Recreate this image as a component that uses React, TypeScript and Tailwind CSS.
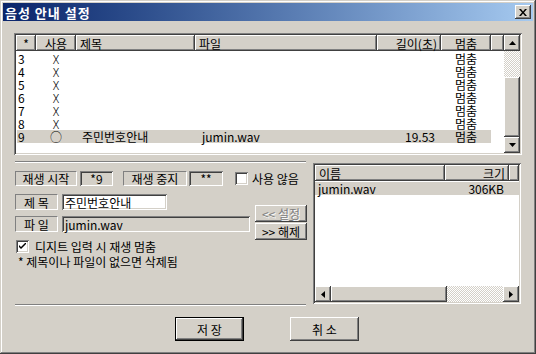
import React from 'react';

// classic 3D edges
const raised = 'shadow-[inset_-1px_-1px_#404040,inset_1px_1px_#ffffff,inset_-2px_-2px_#808080]';
const sunken = 'shadow-[inset_1px_1px_#808080,inset_-1px_-1px_#ffffff,inset_2px_2px_#404040,inset_-2px_-2px_#d4d0c8]';
const checker = 'bg-[repeating-conic-gradient(#ffffff_0_25%,#d4d0c8_0_50%)] bg-[length:2px_2px]';
const staticEdge = 'border-t border-l border-[#808080] border-b border-r border-b-white border-r-white';

type Row = { n: string; use: string; title?: string; file?: string; len?: string; sel?: boolean };

const rows: Row[] = [
  { n: '3', use: 'X' },
  { n: '4', use: 'X' },
  { n: '5', use: 'X' },
  { n: '6', use: 'X' },
  { n: '7', use: 'X' },
  { n: '8', use: 'X' },
  { n: '9', use: '○', title: '주민번호안내', file: 'jumin.wav', len: '19.53', sel: true },
];

function Arrow({ dir }: { dir: 'up' | 'down' | 'left' | 'right' }) {
  const pts = {
    up: '0,4 7,4 3.5,0',
    down: '0,0 7,0 3.5,4',
    left: '4,0 4,7 0,3.5',
    right: '0,0 0,7 4,3.5',
  }[dir];
  const vert = dir === 'up' || dir === 'down';
  return (
    <svg width={vert ? 7 : 4} height={vert ? 4 : 7} viewBox={vert ? '0 0 7 4' : '0 0 4 7'}>
      <polygon points={pts} fill="#000" />
    </svg>
  );
}

function HeadCell({ w, children, align = 'left' }: { w: string; children?: React.ReactNode; align?: string }) {
  return (
    <div className={`${w} h-full shrink-0 bg-[#d4d0c8] ${raised} flex items-center px-[4px] ${align}`}>
      {children}
    </div>
  );
}

function CheckBox({ checked }: { checked?: boolean }) {
  return (
    <div className={`w-[13px] h-[13px] shrink-0 bg-white ${sunken} flex items-center justify-center`}>
      {checked && (
        <svg width="7" height="7" viewBox="0 0 7 7">
          <path d="M0 2 L0 4 L2 6 L7 1 L7 -1 L2 4 Z" fill="#000" />
        </svg>
      )}
    </div>
  );
}

function TopList() {
  return (
    <div className={`h-[122px] bg-white p-[2px] ${sunken} flex`}>
      <div className="flex-1 flex flex-col overflow-hidden">
        <div className="h-[16px] flex">
          <HeadCell w="w-[20px]" align="justify-center">*</HeadCell>
          <HeadCell w="w-[40px]" align="justify-center">사용</HeadCell>
          <HeadCell w="w-[119px]">제목</HeadCell>
          <HeadCell w="w-[182px]">파일</HeadCell>
          <HeadCell w="w-[64px]" align="justify-end">길이(초)</HeadCell>
          <HeadCell w="w-[50px]" align="justify-center">멈춤</HeadCell>
          <HeadCell w="w-[13px]" />
        </div>
        <div className="mt-[1px] flex flex-col">
          {rows.map((r) => (
            <div key={r.n} className="h-[13px] flex">
              <div className={`flex w-[474px] ml-[1px] ${r.sel ? 'bg-[#d4d0c8]' : ''}`}>
                <div className="w-[19px] pl-[1px]">{r.n}</div>
                <div className="w-[40px] text-center font-light">{r.use}</div>
                <div className="w-[119px] pl-[6px]">{r.title}</div>
                <div className="w-[182px] pl-[7px]">{r.file}</div>
                <div className="w-[64px] text-right pr-[6px]">{r.len}</div>
                <div className="w-[50px] text-center">멈춤</div>
              </div>
            </div>
          ))}
        </div>
      </div>
      <div className="w-[16px] flex flex-col">
        <div className={`h-[16px] bg-[#d4d0c8] ${raised} flex items-center justify-center`}>
          <Arrow dir="up" />
        </div>
        <div className={`h-[26px] ${checker}`} />
        <div className={`h-[60px] bg-[#d4d0c8] ${raised}`} />
        <div className={`h-[16px] bg-[#d4d0c8] ${raised} flex items-center justify-center`}>
          <Arrow dir="down" />
        </div>
      </div>
    </div>
  );
}

function FileList() {
  return (
    <div className={`ml-auto mr-[1px] mt-[2px] w-[208px] h-[141px] bg-white p-[2px] ${sunken} flex flex-col`}>
      <div className="h-[16px] flex">
        <HeadCell w="w-[130px]">이름</HeadCell>
        <HeadCell w="w-[64px]" align="justify-end">크기</HeadCell>
        <HeadCell w="w-[10px]" />
      </div>
      <div className="mt-[1px] h-[13px] bg-[#d4d0c8] flex pl-[3px] pr-[15px] justify-between">
        <span>jumin.wav</span>
        <span>306KB</span>
      </div>
      <div className="mt-auto h-[16px] flex">
        <div className={`w-[16px] bg-[#d4d0c8] ${raised} flex items-center justify-center`}>
          <Arrow dir="left" />
        </div>
        <div className={`w-[116px] bg-[#d4d0c8] ${raised}`} />
        <div className={`flex-1 ${checker}`} />
        <div className={`w-[16px] bg-[#d4d0c8] ${raised} flex items-center justify-center`}>
          <Arrow dir="right" />
        </div>
      </div>
    </div>
  );
}

function Controls() {
  return (
    <div className="ml-[1px] w-[292px] h-[145px] flex flex-col">
      <div className="w-[291px] h-[2px] border-t border-[#808080] border-b border-b-white" />

      {/* 재생 시작 / 중지 */}
      <div className="mt-[8px] h-[15px] flex items-stretch">
        <div className={`w-[62px] ${staticEdge} flex items-center justify-center`}>재생 시작</div>
        <div className={`ml-[3px] w-[33px] ${sunken} flex items-center justify-center`}>*9</div>
        <div className={`ml-[10px] w-[64px] ${staticEdge} flex items-center justify-center`}>재생 중지</div>
        <div className={`ml-[2px] w-[34px] ${sunken} flex items-center justify-center`}>**</div>
        <div className="ml-[12px] flex items-center gap-[4px]">
          <CheckBox />
          <span>사용 않음</span>
        </div>
      </div>

      {/* 제목 / 파일 */}
      <div className="mt-[8px] flex items-start">
        <div className="w-[236px] flex flex-col gap-[6px]">
          <div className="h-[16px] flex">
            <div className={`w-[43px] ${staticEdge} flex items-center justify-center`}>제 목</div>
            <div className={`ml-[4px] w-[105px] bg-white ${sunken} flex items-center pl-[3px]`}>주민번호안내</div>
          </div>
          <div className="h-[16px] flex">
            <div className={`w-[43px] ${staticEdge} flex items-center justify-center`}>파 일</div>
            <div className={`ml-[4px] w-[188px] ${sunken} flex items-center pl-[3px]`}>jumin.wav</div>
          </div>
        </div>
        <div className="ml-[4px] mt-[11px] flex flex-col gap-[1px]">
          <div className={`w-[52px] h-[17px] ${raised} flex items-center justify-center text-[#808080] [text-shadow:1px_1px_#ffffff]`}>
            &lt;&lt; 설정
          </div>
          <div className={`w-[52px] h-[17px] ${raised} flex items-center justify-center`}>&gt;&gt; 해제</div>
        </div>
      </div>

      <div className="h-[13px] flex items-center gap-[6px] pl-[1px]">
        <CheckBox checked />
        <span>디지트 입력 시 재생 멈춤</span>
      </div>
      <div className="mt-[2px] h-[13px] pl-[3px]">* 제목이나 파일이 없으면 삭제됨</div>

      <div className="mt-auto w-[291px] h-[2px] border-t border-[#808080] border-b border-b-white" />
    </div>
  );
}

export default function App() {
  return (
    <div className="w-[536px] h-[354px] bg-[#d4d0c8] p-[3px] shadow-[inset_-1px_-1px_#404040,inset_1px_1px_#d4d0c8,inset_-2px_-2px_#808080,inset_2px_2px_#ffffff] font-['Noto_Sans_CJK_KR',sans-serif] text-[12px] leading-[13px] text-black flex flex-col">
      {/* title bar */}
      <div className="h-[18px] bg-linear-to-r from-[#0a246a] to-[#a6caf0] flex items-center pl-[2px] pr-[2px]">
        <span className="text-white font-bold text-[13px] tracking-[1px]">음성 안내 설정</span>
        <div className={`ml-auto w-[16px] h-[14px] bg-[#d4d0c8] ${raised} flex items-center justify-center`}>
          <svg width="8" height="7" viewBox="0 0 8 7">
            <path d="M0 0 H2 L4 2.5 L6 0 H8 L5 3.5 L8 7 H6 L4 4.5 L2 7 H0 L3 3.5 Z" fill="#000" />
          </svg>
        </div>
      </div>

      <div className="px-[11px] pt-[12px] flex flex-col">
        <TopList />

        <div className="mt-[6px] flex">
          <Controls />
          <FileList />
        </div>

        <div className="mt-[11px] flex justify-center gap-[46px] pr-[2px]">
          <div className="w-[69px] h-[24px] border border-black flex">
            <div className={`flex-1 ${raised} flex items-center justify-center`}>저 장</div>
          </div>
          <div className={`w-[69px] h-[24px] ${raised} flex items-center justify-center`}>취 소</div>
        </div>
      </div>
    </div>
  );
}
